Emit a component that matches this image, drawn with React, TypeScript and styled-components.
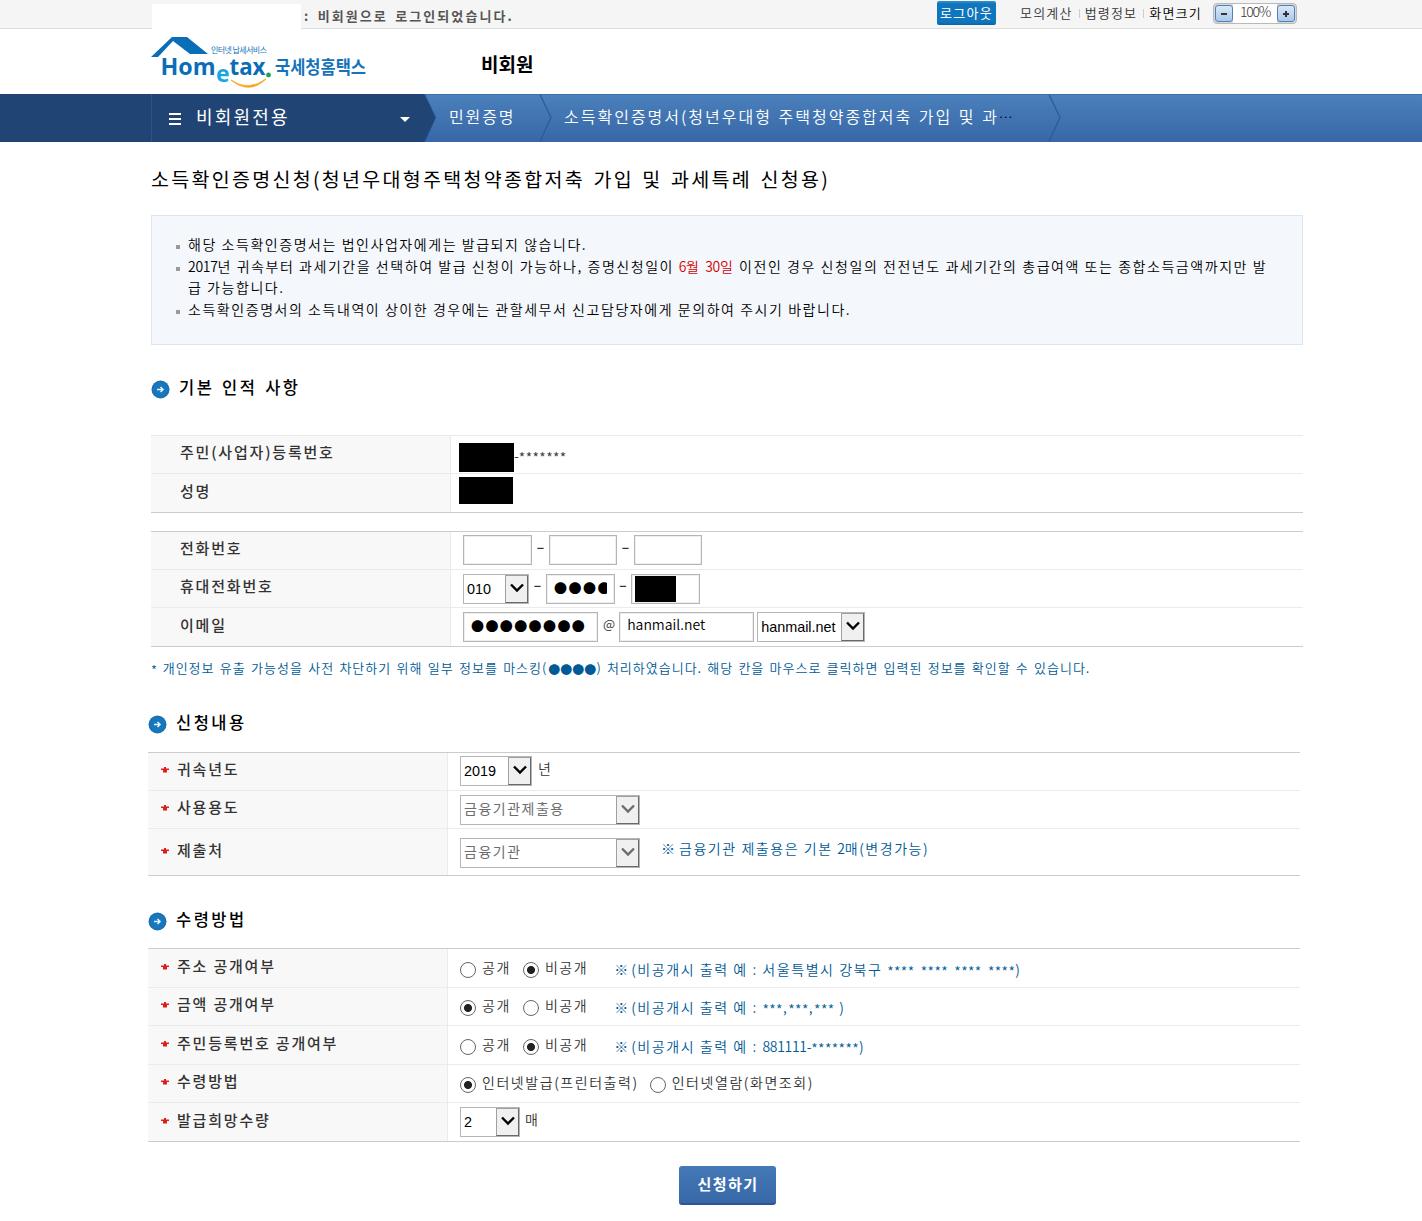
import React from 'react';
import styled, { createGlobalStyle } from 'styled-components';

const GlobalStyle = createGlobalStyle`
    * { box-sizing: border-box; }
    body {
        margin: 0;
        background: #fff;
        color: #333;
        font-family: "Noto Sans CJK KR", sans-serif;
        font-size: 14px;
    }
    p, h1, h2, ul, li { margin: 0; padding: 0; font-weight: 400; list-style: none; }
`;

interface TextProps {
    $size?: number;
    $track?: number;
    $word?: number;
    $weight?: number;
    $color?: string;
    $x?: number;
    $y?: number;
}

const Text = styled.span<TextProps>`
    flex: none;
    white-space: nowrap;
    line-height: 20px;
    font-size: ${(p) => p.$size || 14}px;
    letter-spacing: ${(p) => (p.$track === undefined ? 1.55 : p.$track)}px;
    word-spacing: ${(p) => p.$word || 0}px;
    font-weight: ${(p) => p.$weight || 350};
    color: ${(p) => p.$color || 'inherit'};
    margin-left: ${(p) => p.$x || 0}px;
    margin-top: ${(p) => p.$y || 0}px;
`;

const TopBar = styled.div`
    display: flex;
    height: 29px;
    padding-left: 152px;
    background: #f5f5f5;
    border-bottom: 1px solid #ddd;
`;

const UserName = styled.div`
    flex: none;
    width: 149px;
    height: 26px;
    margin-top: 4px;
    background: #fff;
`;

const LoginState = styled.div`
    flex: none;
    width: 636px;
    padding: 5px 0 0 3px;
    color: #555;
`;

const Logout = styled.button`
    width: 59px;
    height: 24px;
    margin: 1px 24px 0 0;
    padding: 0 0 0 3px;
    border: 0;
    border-radius: 2px;
    background: linear-gradient(#3a8fcb 0, #0f75bd 3px, #0f75bd 21px, #0a64a5 24px);
    font-family: inherit;
    text-align: left;
    line-height: 20px;
`;

const Links = styled.div`
    display: flex;
    flex: none;
    align-items: center;
    width: 193px;
    height: 25px;
`;

const Bar = styled.i`
    width: 1px;
    height: 9px;
    margin: 2px 5px 0 6px;
    background: #ccc;
`;

const ZoomBox = styled.div`
    display: flex;
    justify-content: space-between;
    width: 84px;
    height: 21px;
    margin-top: 3px;
    padding: 1px;
    border: 1px solid #b9b9b9;
    border-radius: 4px;
    background: linear-gradient(to right, #d8d8d8 19px, #fff 19px, #fff 63px, #d8d8d8 63px);
`;

const ZoomButton = styled.button`
    width: 18px;
    height: 17px;
    padding: 0;
    border: 1px solid #5580b3;
    border-radius: 3px;
    background: linear-gradient(#d9e8f8, #a9c9ea);

    svg { display: block; margin: auto; }
`;

const Header = styled.header`
    display: flex;
    height: 65px;
    padding-left: 151px;
    color: #000;
`;

const HeaderTitle = styled.div`
    padding: 25px 0 0 110px;
`;

const Nav = styled.nav`
    display: flex;
    height: 48px;
    color: #fff;
    background: linear-gradient(#2f6299 0, #4a80bc 1px, #3767a6 100%);

    svg { flex: none; display: block; }
`;

const Menu = styled.div`
    display: flex;
    flex: none;
    align-items: center;
    width: 424px;
    background: linear-gradient(to right, #204474 151px, #28548a 151px, #28548a 152px, #204474 152px);
`;

const Burger = styled.div`
    width: 12px;
    height: 12px;
    margin: 1px 15px 0 169px;
    border: solid #fff;
    border-width: 2px 0;
    background: linear-gradient(transparent 3px, #fff 3px, #fff 5px, transparent 5px);
`;

const Caret = styled.i`
    margin: 3px 14px 0 auto;
    border: 5px solid transparent;
    border-top-color: #fff;
    border-bottom: 0;
`;

const Crumb = styled.div<{ $width: number }>`
    display: flex;
    flex: none;
    align-items: center;
    width: ${(p) => p.$width}px;
    padding-bottom: 5px;
`;

const Content = styled.main`
    width: 1152px;
    margin-left: 151px;
`;

const Title = styled.h1`
    display: flex;
    height: 73px;
    padding-top: 27px;
    color: #000;
`;

const Notice = styled.ul`
    height: 130px;
    padding: 18px 0 0 24px;
    border: 1px solid #dfe5f0;
    background: #f4f7fc;
    color: #000;
`;

const NoticeItem = styled.li`
    display: flex;
    line-height: 21.6px;

    &::before {
        content: '';
        flex: none;
        width: 4px;
        height: 4px;
        margin: 11px 8px 0 0;
        background: #999;
    }

    ${Text} { line-height: 21.6px; }
`;

const Digits = styled.span`
    letter-spacing: -0.3px;
`;

const Red = styled.span`
    color: #d40000;
`;

const Stars = styled.span`
    position: relative;
    top: 2px;
    letter-spacing: 0.4px;
    word-spacing: 2.7px;
`;

const Section = styled.section<{ $top: number; $shift?: number }>`
    margin-top: ${(p) => p.$top}px;
    margin-left: ${(p) => p.$shift || 0}px;
    width: 1152px;
`;

const SectionTitle = styled.h2<{ $gap: number }>`
    display: flex;
    align-items: center;
    height: 20px;
    margin-bottom: ${(p) => p.$gap}px;
    color: #000;

    svg { margin: 1px 9px 0 0; }
`;

const Table = styled.div<{ $light?: boolean }>`
    border-top: 1px solid ${(p) => (p.$light ? '#e9e9e9' : '#ccc')};
    border-bottom: 1px solid #ccc;
`;

const Row = styled.div<{ $height: number }>`
    display: flex;
    height: ${(p) => p.$height}px;
    border-bottom: 1px solid #ebebeb;

    &:last-child { border-bottom: 0; }
`;

const Label = styled.div`
    display: flex;
    flex: none;
    align-items: center;
    width: 300px;
    padding: 0 0 5px 29px;
    border-right: 1px solid #ebebeb;
    background: #f8f8f8;
`;

const Star = styled.svg`
    flex: none;
    margin: 2px 8px 0 -16px;
`;

const Value = styled.div<{ $left?: number; $up?: number }>`
    display: flex;
    flex: 1;
    align-items: center;
    padding-left: ${(p) => p.$left || 12}px;
    padding-bottom: ${(p) => p.$up || 0}px;
`;

const Mask = styled.div<{ $width: number; $height: number; $y?: number }>`
    width: ${(p) => p.$width}px;
    height: ${(p) => p.$height}px;
    margin-top: ${(p) => p.$y || 0}px;
    background: #000;
`;

const Field = styled.div<{ $width: number; $pad?: number; $x?: number }>`
    flex: none;
    display: flex;
    align-items: center;
    overflow: hidden;
    width: ${(p) => p.$width}px;
    height: 30px;
    margin-left: ${(p) => p.$x || 0}px;
    padding: 0 7px 0 ${(p) => (p.$pad === undefined ? 7 : p.$pad)}px;
    border: 1px solid #b5b5b5;
    background: #fff;
    color: #000;
    box-shadow: inset 0 0 0 1px #eee;
`;

const Clip = styled.div`
    display: flex;
    overflow: hidden;
    padding-bottom: 2px;
`;

const SelectBox = styled.div<{ $width: number; $off?: boolean; $x?: number; $y?: number }>`
    flex: none;
    display: flex;
    justify-content: space-between;
    align-items: center;
    width: ${(p) => p.$width}px;
    height: 30px;
    margin-left: ${(p) => p.$x || 0}px;
    margin-top: ${(p) => p.$y || 0}px;
    padding-left: 3px;
    border: 1px solid #b5b5b5;
    background: #fff;
    color: ${(p) => (p.$off ? '#6d6d6d' : '#000')};
    font-family: "Liberation Sans", "Noto Sans CJK KR", sans-serif;
`;

const Arrow = styled.span`
    display: flex;
    align-items: center;
    justify-content: center;
    width: 23px;
    height: 28px;
    padding-bottom: 2px;
    border: 1px solid #a0a0a0;
    border-right-color: #696969;
    border-bottom-color: #696969;
    background: #f0f0f0;
`;

const Dash = styled.span<{ $width?: number }>`
    flex: none;
    width: ${(p) => p.$width || 17}px;
    margin-top: -13px;
    text-align: center;
    font-size: 25px;
    font-weight: 300;
    line-height: 20px;
`;

const Radio = styled.span<{ $on?: boolean; $x?: number }>`
    flex: none;
    width: 16px;
    height: 16px;
    margin: 3px 6px 0 ${(p) => p.$x || 0}px;
    border: 1px solid #666;
    border-radius: 50%;
    background: ${(p) => (p.$on ? 'radial-gradient(circle, #222 3.6px, #fff 4.4px)' : '#fff')};
`;

const MaskNote = styled.p`
    display: flex;
    align-items: center;
    height: 20px;
    margin-top: 11px;
    color: #005a96;
`;

const Submit = styled.button`
    display: block;
    width: 97px;
    height: 39px;
    margin: 24px 0 0 528px;
    padding: 0 0 1px 1px;
    border: 0;
    border-bottom: 2px solid #2c5590;
    border-radius: 3px;
    background: linear-gradient(#4579b8, #3767a6);
    color: #fff;
    font-family: inherit;
`;

const blue = '#005a96';

const Logo = () => (
    <svg width="220" height="58" viewBox="151 32 220 58" style={{ marginTop: 3 }}>
        <path d="M151 57L172 37H187L208 54H190L173 41L158 57Z" fill="#0a6db8" />
        <g fill="#0a6db8" fontFamily='"Open Sans", sans-serif' fontWeight="700">
            <text x="160.500" y="75" fontSize="24" textLength="55" lengthAdjust="spacingAndGlyphs">Hom</text>
            <text x="229.500" y="75" fontSize="24" textLength="36" lengthAdjust="spacingAndGlyphs">tax</text>
            <text x="216" y="82" fontSize="23" fill="#1aa7e0">e</text>
        </g>
        <g fill="#1673bb" fontFamily='"Noto Sans CJK KR", sans-serif'>
            <text x="211" y="53" fontSize="8" textLength="56">인터넷 납세서비스</text>
            <text x="275" y="74" fontSize="18" fontWeight="700" textLength="91" lengthAdjust="spacingAndGlyphs">국세청홈택스</text>
        </g>
        <circle cx="268.500" cy="75" r="2.400" fill="#1fa352" />
        <path d="M231 80Q248 92 266 79Q249 95 231 80Z" fill="#f5a31a" stroke="#f5a31a" strokeWidth="0.800" />
    </svg>
);

const Chevron = () => (
    <svg width="13" height="48" viewBox="0 0 13 48" fill="none">
        <path d="M0 0.500L11 23.500L0 47.500" stroke="#245f97" strokeWidth="1.300" />
    </svg>
);

const Heading = ({ gap, children }: { gap: number; children: string }) => (
    <SectionTitle $gap={gap}>
        <svg width="19" height="19" viewBox="0 0 19 19">
            <circle cx="9.500" cy="9.500" r="9" fill="#1a6fae" />
            <circle cx="9.500" cy="9.500" r="7.500" fill="#1878bd" />
            <path d="M6 9.500H12M9.500 7L12 9.500L9.500 12" stroke="#e6f2fa" strokeWidth="1.500" fill="none" />
        </svg>
        <Text $size={16.5} $track={2.5} $word={1.5} $weight={500} $y={-4}>{children}</Text>
    </SectionTitle>
);

const Name = ({ required, children }: { required?: boolean; children: string }) => (
    <Label>
        {required && (
            <Star width="8" height="6" viewBox="0 0 8 6">
                <path d="M3 0H5V1.500H8V3H6V5.500H2V3H0V1.500H3Z" fill="#dd1c1c" />
            </Star>
        )}
        <Text $size={15} $track={1.8} $weight={500}>{children}</Text>
    </Label>
);

interface SelectProps {
    width: number;
    off?: boolean;
    x?: number;
    y?: number;
    children: string;
}

const Select = ({ width, off, x, y, children }: SelectProps) => (
    <SelectBox $width={width} $off={off} $x={x} $y={y}>
        <Text $size={off ? 14 : 14.4} $track={off ? 1.5 : 0} $weight={400} $y={off ? -2 : 0}>{children}</Text>
        <Arrow>
            <svg width="14" height="10" viewBox="0 0 14 10">
                <path d="M1 1.500L7 7.500L13 1.500" stroke="currentColor" strokeWidth="2.400" fill="none" />
            </svg>
        </Arrow>
    </SelectBox>
);

const OpenChoice = ({ open }: { open?: boolean }) => (
    <>
        <Radio $on={open} />
        <Text $y={-3}>공개</Text>
        <Radio $on={!open} $x={12} />
        <Text $y={-3}>비공개</Text>
        <Text $x={26} $y={1} $track={0} $color={blue}>※</Text>
    </>
);

const App = () => {
    return (
        <>
            <GlobalStyle />
            <TopBar>
                <UserName />
                <LoginState>
                    <Text $size={13} $track={2.05} $word={2.5} $weight={600}>: 비회원으로 로그인되었습니다.</Text>
                </LoginState>
                <Logout>
                    <Text $size={13} $track={1.3} $weight={400} $color={'#fff'}>로그아웃</Text>
                </Logout>
                <Links>
                    <Text $size={13} $track={1.2}>모의계산</Text>
                    <Bar />
                    <Text $size={13} $track={1.2}>법령정보</Text>
                    <Bar />
                    <Text $size={13} $track={1.2} $color={'#000'}>화면크기</Text>
                </Links>
                <ZoomBox>
                    <ZoomButton>
                        <svg width="8" height="8"><path d="M1 4H7" stroke="#333" strokeWidth="2" /></svg>
                    </ZoomButton>
                    <Text $track={-1.3} $weight={300} $y={-4}>100%</Text>
                    <ZoomButton>
                        <svg width="8" height="8"><path d="M1 4H7M4 1V7" stroke="#333" strokeWidth="2" /></svg>
                    </ZoomButton>
                </ZoomBox>
            </TopBar>
            <Header>
                <Logo />
                <HeaderTitle>
                    <Text $size={19} $track={0} $weight={700}>비회원</Text>
                </HeaderTitle>
            </Header>
            <Nav>
                <Menu>
                    <Burger />
                    <Text $size={18} $track={2.2} $weight={400} $y={-4}>비회원전용</Text>
                    <Caret />
                </Menu>
                <svg width="13" height="48" viewBox="0 0 13 48">
                    <path d="M0 0L11.500 23.500L0 48Z" fill="#204474" />
                    <path d="M0.500 0L11.500 23.500L0.500 48" stroke="#1d4f86" fill="none" />
                </svg>
                <Crumb $width={103}>
                    <Text $size={16} $track={1.9} $x={12}>민원증명</Text>
                </Crumb>
                <Chevron />
                <Crumb $width={496}>
                    <Text $size={16} $track={2} $word={1} $x={11}>소득확인증명서(청년우대형 주택청약종합저축 가입 및 과</Text>
                    <Text $size={14} $track={0} $weight={300} $color={'#000'}>…</Text>
                </Crumb>
                <Chevron />
            </Nav>
            <Content>
                <Title>
                    <Text $size={19.5} $track={2.3} $word={1.8} $weight={400}>소득확인증명신청(청년우대형주택청약종합저축 가입 및 과세특례 신청용)</Text>
                </Title>
                <Notice>
                    <NoticeItem>
                        <Text>해당 소득확인증명서는 법인사업자에게는 발급되지 않습니다.</Text>
                    </NoticeItem>
                    <NoticeItem>
                        <Text>
                            <Digits>2017</Digits>년 귀속부터 과세기간을 선택하여 발급 신청이 가능하나, 증명신청일이 <Red><Digits>6</Digits>월 <Digits>30</Digits>일</Red> 이전인 경우 신청일의 전전년도 과세기간의 총급여액 또는 종합소득금액까지만 발<br />
                            급 가능합니다.
                        </Text>
                    </NoticeItem>
                    <NoticeItem>
                        <Text>소득확인증명서의 소득내역이 상이한 경우에는 관할세무서 신고담당자에게 문의하여 주시기 바랍니다.</Text>
                    </NoticeItem>
                </Notice>

                <Section $top={34}>
                    <Heading gap={36}>기본 인적 사항</Heading>
                    <Table $light>
                        <Row $height={38}>
                            <Name>주민(사업자)등록번호</Name>
                            <Value $left={8}>
                                <Mask $width={55} $height={29} $y={6} />
                                <Text $track={0}>-<Stars>*******</Stars></Text>
                            </Value>
                        </Row>
                        <Row $height={38}>
                            <Name>성명</Name>
                            <Value $left={8}>
                                <Mask $width={54} $height={27} $y={-5} />
                            </Value>
                        </Row>
                    </Table>
                </Section>

                <Section $top={18}>
                    <Table>
                        <Row $height={38}>
                            <Name>전화번호</Name>
                            <Value $up={1}>
                                <Field $width={69} />
                                <Dash>-</Dash>
                                <Field $width={68} />
                                <Dash>-</Dash>
                                <Field $width={68} />
                            </Value>
                        </Row>
                        <Row $height={38}>
                            <Name>휴대전화번호</Name>
                            <Value>
                                <Select width={66}>010</Select>
                                <Dash>-</Dash>
                                <Field $width={69}>
                                    <Clip><Text $size={13} $track={1.5}>●●●●</Text></Clip>
                                </Field>
                                <Dash $width={16}>-</Dash>
                                <Field $width={69} $pad={3}>
                                    <Mask $width={41} $height={26} />
                                </Field>
                            </Value>
                        </Row>
                        <Row $height={38}>
                            <Name>이메일</Name>
                            <Value>
                                <Field $width={135}>
                                    <Clip><Text $size={13} $track={1.4}>●●●●●●●●</Text></Clip>
                                </Field>
                                <Text $size={13} $track={0} $x={5} $y={-6}>@</Text>
                                <Field $width={135} $x={4}>
                                    <Text $track={0} $y={-6}>hanmail.net</Text>
                                </Field>
                                <Select width={108} x={3}>hanmail.net</Select>
                            </Value>
                        </Row>
                    </Table>
                    <MaskNote>
                        <Text $size={13} $track={1} $word={1.4}><Stars>*</Stars> 개인정보 유출 가능성을 사전 차단하기 위해 일부 정보를 마스킹(</Text>
                        <Text $size={12} $track={0} $x={1} $y={3}>●●●●</Text>
                        <Text $size={13} $track={1} $word={1.3}>) 처리하였습니다. 해당 칸을 마우스로 클릭하면 입력된 정보를 확인할 수 있습니다.</Text>
                    </MaskNote>
                </Section>

                <Section $top={36} $shift={-3}>
                    <Heading gap={18}>신청내용</Heading>
                    <Table>
                        <Row $height={38}>
                            <Name required>귀속년도</Name>
                            <Value $up={1}>
                                <Select width={72}>2019</Select>
                                <Text $x={6} $y={-6}>년</Text>
                            </Value>
                        </Row>
                        <Row $height={38}>
                            <Name required>사용용도</Name>
                            <Value>
                                <Select width={180} off>금융기관제출용</Select>
                            </Value>
                        </Row>
                        <Row $height={46}>
                            <Name required>제출처</Name>
                            <Value>
                                <Select width={180} off y={2}>금융기관</Select>
                                <Text $x={21} $y={-9} $track={0} $color={blue}>※</Text>
                                <Text $x={4} $y={-9} $color={blue}>금융기관 제출용은 기본 <Digits>2</Digits>매(변경가능)</Text>
                            </Value>
                        </Row>
                    </Table>
                </Section>

                <Section $top={35} $shift={-3}>
                    <Heading gap={17}>수령방법</Heading>
                    <Table>
                        <Row $height={39}>
                            <Name required>주소 공개여부</Name>
                            <Value>
                                <OpenChoice />
                                <Text $x={3} $y={1} $color={blue}>(비공개시 출력 예 : 서울특별시 강북구 <Stars>**** **** **** ****</Stars>)</Text>
                            </Value>
                        </Row>
                        <Row $height={38}>
                            <Name required>금액 공개여부</Name>
                            <Value $up={1}>
                                <OpenChoice open />
                                <Text $x={3} $y={1} $color={blue}>(비공개시 출력 예 : <Stars>***</Stars>,<Stars>***</Stars>,<Stars>***</Stars> )</Text>
                            </Value>
                        </Row>
                        <Row $height={39}>
                            <Name required>주민등록번호 공개여부</Name>
                            <Value>
                                <OpenChoice />
                                <Text $x={3} $y={1} $color={blue}>(비공개시 출력 예 : <Digits>881111-</Digits><Stars>*******</Stars>)</Text>
                            </Value>
                        </Row>
                        <Row $height={38}>
                            <Name required>수령방법</Name>
                            <Value $up={1}>
                                <Radio $on />
                                <Text $y={-3}>인터넷발급(프린터출력)</Text>
                                <Radio $x={11} />
                                <Text $y={-3}>인터넷열람(화면조회)</Text>
                            </Value>
                        </Row>
                        <Row $height={38}>
                            <Name required>발급희망수량</Name>
                            <Value>
                                <Select width={60}>2</Select>
                                <Text $x={5} $y={-6}>매</Text>
                            </Value>
                        </Row>
                    </Table>
                </Section>
                <Submit>
                    <Text $size={15} $track={1.5} $weight={600}>신청하기</Text>
                </Submit>
            </Content>
        </>
    );
}

export default App;
